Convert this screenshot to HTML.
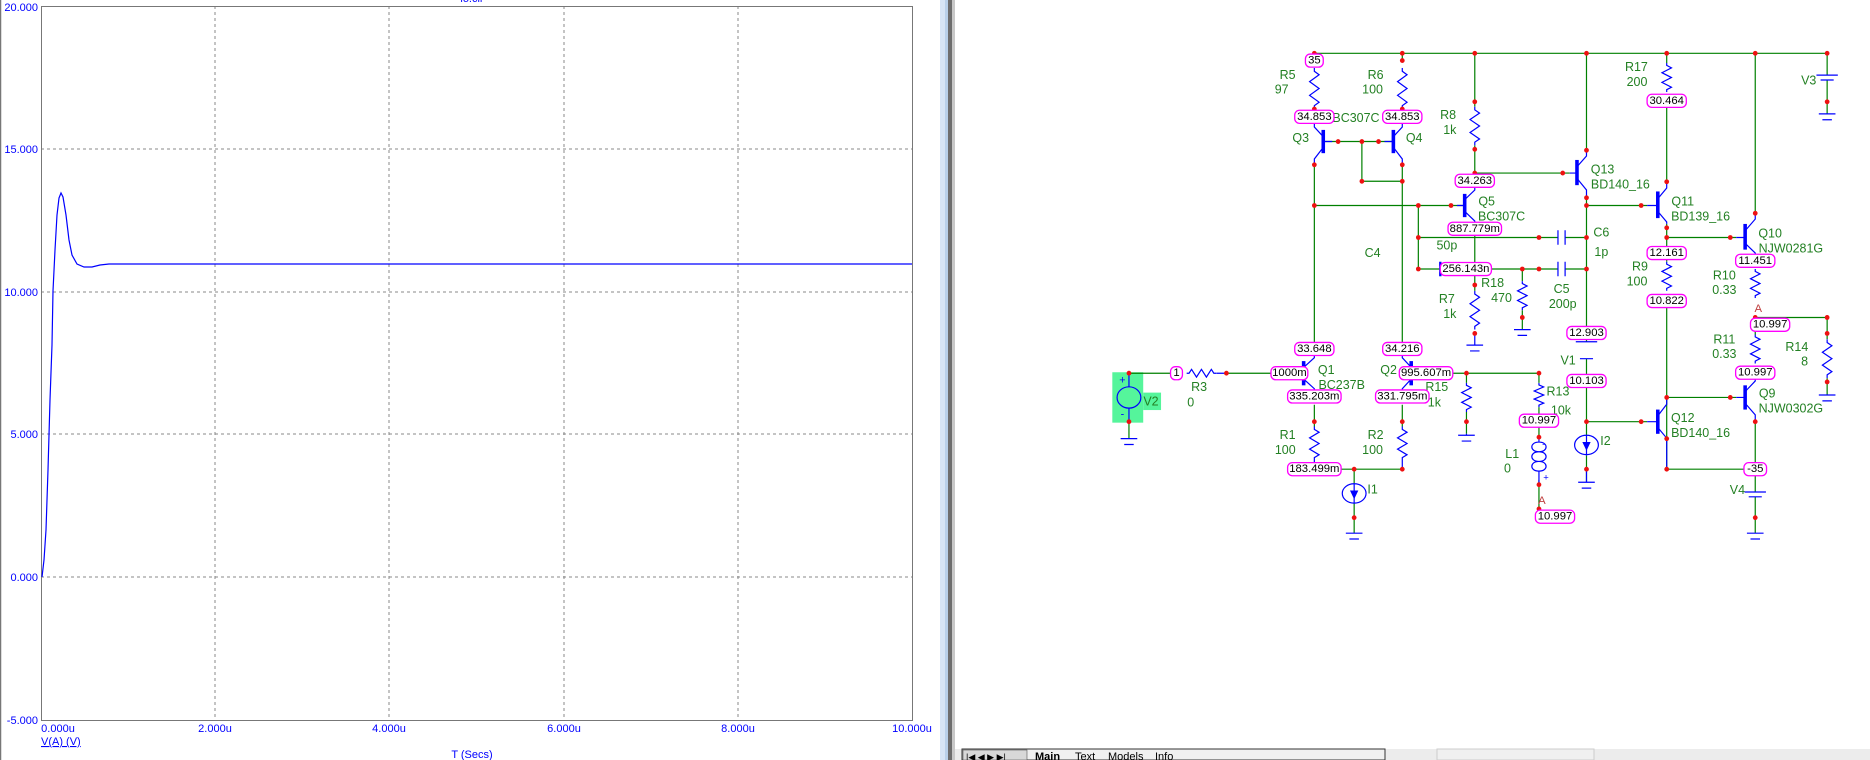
<!DOCTYPE html>
<html><head><meta charset="utf-8"><style>
html,body{margin:0;padding:0;background:#fff;width:1870px;height:760px;overflow:hidden;font-family:"Liberation Sans",Arial,sans-serif}
svg{position:absolute;left:0;top:0}
.ax{fill:#0000ff;font-size:11px}
.g{fill:#238023;font-size:21px;text-anchor:middle;dominant-baseline:central}
.bx rect{fill:#fff;stroke:#ff00ff;stroke-width:2.2}
.bx text{fill:#000;font-size:19px;text-anchor:middle;dominant-baseline:central}
.w{stroke:#008000;fill:none}
.b{stroke:#0000ff;fill:none}
.w,.b{vector-effect:non-scaling-stroke;stroke-width:1.2}
.d{fill:#ee1111}
.bar{fill:#0000ff}
</style></head><body>
<svg width="1870" height="760" viewBox="0 0 1870 760">
<rect x="0" y="0" width="940" height="760" fill="#fff"/>
<line x1="0.5" y1="0" x2="0.5" y2="760" stroke="#777" stroke-width="1.5"/>
<g stroke="#888" stroke-width="1" stroke-dasharray="3,3">
<line x1="41" y1="149" x2="912" y2="149"/><line x1="41" y1="292" x2="912" y2="292"/>
<line x1="41" y1="434" x2="912" y2="434"/><line x1="41" y1="577" x2="912" y2="577"/>
<line x1="215" y1="6" x2="215" y2="720"/><line x1="389" y1="6" x2="389" y2="720"/>
<line x1="564" y1="6" x2="564" y2="720"/><line x1="738" y1="6" x2="738" y2="720"/>
</g>
<rect x="41.5" y="6.5" width="871" height="714" fill="none" stroke="#777" stroke-width="1"/>
<text class="ax" x="38" y="11" text-anchor="end">20.000</text>
<text class="ax" x="38" y="153" text-anchor="end">15.000</text>
<text class="ax" x="38" y="296" text-anchor="end">10.000</text>
<text class="ax" x="38" y="438" text-anchor="end">5.000</text>
<text class="ax" x="38" y="581" text-anchor="end">0.000</text>
<text class="ax" x="38" y="724" text-anchor="end">-5.000</text>
<text class="ax" x="58" y="732" text-anchor="middle">0.000u</text>
<text class="ax" x="215" y="732" text-anchor="middle">2.000u</text>
<text class="ax" x="389" y="732" text-anchor="middle">4.000u</text>
<text class="ax" x="564" y="732" text-anchor="middle">6.000u</text>
<text class="ax" x="738" y="732" text-anchor="middle">8.000u</text>
<text class="ax" x="912" y="732" text-anchor="middle">10.000u</text>
<text class="ax" x="41" y="745" text-decoration="underline">V(A) (V)</text>
<text class="ax" x="472" y="758" text-anchor="middle">T (Secs)</text>
<text class="ax" x="472" y="2" text-anchor="middle">io.cir</text>
<polyline fill="none" stroke="#0000ff" stroke-width="1.2" points="42,577 44,560 46,530 48,470 50,400 52,345 53,291 55,250 57,215 59,198 61,193 63,197 66,215 69,240 72,255 77,264 84,267 92,267 100,265 109,264 912,264"/>
<rect x="940" y="0" width="8" height="760" fill="#d6e4f4"/>
<rect x="945" y="0" width="3" height="760" fill="#b8cfe8"/>
<rect x="948" y="0" width="4" height="760" fill="#6d6d6d"/>
<rect x="952" y="0" width="3" height="760" fill="#c8c8c8"/>
<rect x="955" y="749" width="915" height="11" fill="#ececec"/>
<rect x="962" y="749" width="423" height="11" fill="#f0f0f0" stroke="#333" stroke-width="1"/>
<g fill="#000" font-size="11">
<rect x="963" y="750" width="64" height="10" fill="#d8d8d8" stroke="#555" stroke-width="0.6"/>
<text x="966" y="760" font-size="9">|◀ ◀ ▶ ▶|</text>
<text x="1035" y="760" font-weight="bold">Main</text>
<text x="1075" y="760">Text</text>
<text x="1108" y="760">Models</text>
<text x="1155" y="760">Info</text>
</g>
<rect x="1437" y="749" width="157" height="11" fill="#f0f0f0" stroke="#ccc"/>
<defs>
<symbol id="rv" viewBox="0 0 20 60" preserveAspectRatio="none"><path d="M10 0 L10 5 L18 10 L2 20 L18 30 L2 40 L18 50 L10 55 L10 60" fill="none" stroke="#0000ff" stroke-width="1.2" vector-effect="non-scaling-stroke"/></symbol>
<symbol id="rh" viewBox="0 0 60 20" preserveAspectRatio="none"><path d="M0 10 L5 10 L10 2 L20 18 L30 2 L40 18 L50 2 L55 10 L60 10" fill="none" stroke="#0000ff" stroke-width="1.2" vector-effect="non-scaling-stroke"/></symbol>
</defs>
<g transform="translate(940,0) scale(0.5942,0.4847)">
<rect x="290" y="768" width="52" height="104" fill="#55f59b"/>
<rect x="342" y="810" width="30" height="36" fill="#55f59b"/>
<path class="w" d="M630 110H1493 M630 110V125 M630 225V241 M778 110V125 M778 225V241
M630 340V720 M645 292H765 M710 292V374H778 M778 340V720
M630 424H880 M805 424V555 M805 490H1040 M1052 490H1088 M805 555H842 M925 555H1040 M1052 555H1088
M900 110V220 M900 300V373 M900 357H1060 M900 485V600 M980 555V580 M980 640V680
M1088 110V310 M1088 408V705 M1088 740V898 M1088 940V995 M1088 424H1190 M1088 870H1190
M1223 110V130 M1223 222V375 M1223 462V540 M1223 635V968 M1223 490H1340 M1223 820H1340 M1223 968H1355
M1372 110V440 M1372 655H1493 M1372 655V690 M1372 870V1015 M1372 1025V1100
M1493 110V155 M1493 165V235 M1493 655V700 M1493 780V815
M318 770H390 M482 770H560 M862 770H1008 M886 770V790 M886 850V895 M1008 770V790 M1008 840V900 M1008 990V1050
M630 835V880 M778 835V880 M672 968H778 M697 968V998 M697 1038V1100 M318 870V905"/>
<use href="#rv" x="620" y="140" width="20" height="85"/>
<use href="#rv" x="768" y="140" width="20" height="85"/>
<use href="#rv" x="890" y="220" width="20" height="80"/>
<use href="#rv" x="890" y="600" width="20" height="80"/>
<use href="#rv" x="970" y="580" width="20" height="60"/>
<use href="#rv" x="1213" y="130" width="20" height="60"/>
<use href="#rv" x="1213" y="540" width="20" height="60"/>
<use href="#rv" x="1362" y="555" width="20" height="60"/>
<use href="#rv" x="1362" y="690" width="20" height="60"/>
<use href="#rv" x="1483" y="700" width="20" height="80"/>
<use href="#rv" x="876" y="790" width="20" height="60"/>
<use href="#rv" x="998" y="790" width="20" height="50"/>
<use href="#rv" x="620" y="880" width="20" height="70"/>
<use href="#rv" x="768" y="880" width="20" height="70"/>
<use href="#rh" x="415" y="760" width="50" height="20"/>
<path class="b" d="M465 770H482 M630 225V230 M630 950V958 M778 950V968"/>
<rect class="bar" x="642" y="268" width="6" height="48"/><path class="b" d="M645 282L630 262V241 M645 304L630 328V340 M645 292H660"/>
<rect class="bar" x="760" y="268" width="6" height="48"/><path class="b" d="M763 282L778 262V241 M763 304L778 328V340 M763 292H748"/>
<rect class="bar" x="880" y="400" width="6" height="48"/><path class="b" d="M883 412L900 392V385 M883 436L900 456V460 M883 424H870"/>
<rect class="bar" x="1069" y="330" width="6" height="52"/><path class="b" d="M1072 344L1088 322V310 M1072 368L1088 392V408 M1072 357H1060"/>
<rect class="bar" x="1205" y="395" width="6" height="55"/><path class="b" d="M1208 410L1223 388V375 M1208 436L1223 458V462 M1208 424H1190"/>
<rect class="bar" x="1352" y="462" width="6" height="53"/><path class="b" d="M1355 476L1372 452V440 M1355 502L1372 522V525 M1355 490H1340"/>
<rect class="bar" x="1352" y="795" width="6" height="50"/><path class="b" d="M1355 808L1372 786V769 M1355 832L1372 856V870 M1355 820H1340"/>
<rect class="bar" x="1205" y="845" width="6" height="50"/><path class="b" d="M1208 858L1223 834V820 M1208 882L1223 904V968 M1208 870H1190"/>
<rect class="bar" x="609" y="745" width="6" height="50"/><path class="b" d="M612 758L630 738V720 M612 782L630 802V818"/>
<rect class="bar" x="790" y="745" width="6" height="50"/><path class="b" d="M793 758L778 738V720 M793 782L778 802V818"/>
<rect class="bar" x="840" y="540" width="4" height="30"/>
<path class="b" d="M1040 475V505 M1052 475V505 M1040 540V570 M1052 540V570"/>
<path class="b" d="M1475 155H1511 M1482 165H1504 M1070 705H1106 M1077 740H1099 M1354 1015H1390 M1361 1025H1383"/>
<path class="b" d="M886 895V898 M872 898H900 M878 910H894
M900 688V712 M886 712H914 M892 724H908 M966 680H994 M972 692H988
M1074 995H1102 M1080 1007H1096 M1088 968V995
M1358 1100H1386 M1364 1112H1380 M1479 235H1507 M1485 247H1501 M1479 815H1507 M1485 827H1501
M683 1100H711 M689 1112H705 M304 905H332 M310 917H326"/>
<ellipse class="b" cx="697" cy="1018" rx="20" ry="20"/><path class="b" d="M697 998V1038"/><path d="M690 1012H704L697 1030Z" fill="#0000ff"/>
<ellipse class="b" cx="1088" cy="918" rx="20" ry="20"/><path class="b" d="M1088 898V940"/><path d="M1081 912H1095L1088 930Z" fill="#0000ff"/>
<ellipse class="b" cx="318" cy="820" rx="20" ry="22"/><path class="b" d="M318 770V798 M318 842V870"/>
<text class="g" transform="translate(307,785) scale(1,1.226)" style="fill:#0000ff;font-size:18px">+</text>
<text class="g" transform="translate(307,855) scale(1,1.226)" style="fill:#0000ff;font-size:18px">-</text>
<path class="b" d="M1008 900V912 C1024 912,1024 932,1008 932 C992 932,992 912,1008 912 M1008 932 C1024 932,1024 952,1008 952 C992 952,992 932,1008 932 M1008 952 C1024 952,1024 972,1008 972 C992 972,992 952,1008 952 M1008 972V1000"/>
<g class="d">
<ellipse cx="630" cy="110" rx="4" ry="5"/><ellipse cx="778" cy="110" rx="4" ry="5"/><ellipse cx="900" cy="110" rx="4" ry="5"/><ellipse cx="1088" cy="110" rx="4" ry="5"/><ellipse cx="1223" cy="110" rx="4" ry="5"/><ellipse cx="1372" cy="110" rx="4" ry="5"/><ellipse cx="1493" cy="110" rx="4" ry="5"/>
<ellipse cx="778" cy="125" rx="4" ry="5"/><ellipse cx="630" cy="225" rx="4" ry="5"/><ellipse cx="778" cy="225" rx="4" ry="5"/>
<ellipse cx="670" cy="292" rx="4" ry="5"/><ellipse cx="710" cy="292" rx="4" ry="5"/><ellipse cx="738" cy="292" rx="4" ry="5"/>
<ellipse cx="630" cy="340" rx="4" ry="5"/><ellipse cx="778" cy="340" rx="4" ry="5"/><ellipse cx="710" cy="374" rx="4" ry="5"/><ellipse cx="778" cy="374" rx="4" ry="5"/>
<ellipse cx="630" cy="424" rx="4" ry="5"/><ellipse cx="805" cy="424" rx="4" ry="5"/><ellipse cx="860" cy="424" rx="4" ry="5"/>
<ellipse cx="900" cy="210" rx="4" ry="5"/><ellipse cx="900" cy="308" rx="4" ry="5"/><ellipse cx="900" cy="357" rx="4" ry="5"/><ellipse cx="1048" cy="357" rx="4" ry="5"/>
<ellipse cx="1088" cy="310" rx="4" ry="5"/><ellipse cx="1088" cy="408" rx="4" ry="5"/><ellipse cx="1088" cy="424" rx="4" ry="5"/><ellipse cx="1180" cy="424" rx="4" ry="5"/>
<ellipse cx="805" cy="490" rx="4" ry="5"/><ellipse cx="1008" cy="490" rx="4" ry="5"/><ellipse cx="1088" cy="490" rx="4" ry="5"/>
<ellipse cx="805" cy="555" rx="4" ry="5"/><ellipse cx="980" cy="555" rx="4" ry="5"/><ellipse cx="1008" cy="555" rx="4" ry="5"/><ellipse cx="1088" cy="555" rx="4" ry="5"/>
<ellipse cx="900" cy="588" rx="4" ry="5"/><ellipse cx="900" cy="688" rx="4" ry="5"/><ellipse cx="980" cy="655" rx="4" ry="5"/>
<ellipse cx="1223" cy="375" rx="4" ry="5"/><ellipse cx="1223" cy="470" rx="4" ry="5"/><ellipse cx="1223" cy="490" rx="4" ry="5"/><ellipse cx="1330" cy="490" rx="4" ry="5"/>
<ellipse cx="1372" cy="440" rx="4" ry="5"/><ellipse cx="1372" cy="655" rx="4" ry="5"/><ellipse cx="1493" cy="655" rx="4" ry="5"/><ellipse cx="1493" cy="688" rx="4" ry="5"/><ellipse cx="1493" cy="788" rx="4" ry="5"/><ellipse cx="1493" cy="210" rx="4" ry="5"/>
<ellipse cx="1223" cy="820" rx="4" ry="5"/><ellipse cx="1330" cy="820" rx="4" ry="5"/><ellipse cx="1372" cy="870" rx="4" ry="5"/><ellipse cx="1223" cy="968" rx="4" ry="5"/><ellipse cx="1223" cy="905" rx="4" ry="5"/><ellipse cx="1372" cy="1068" rx="4" ry="5"/>
<ellipse cx="1088" cy="870" rx="4" ry="5"/><ellipse cx="1180" cy="870" rx="4" ry="5"/><ellipse cx="1088" cy="968" rx="4" ry="5"/>
<ellipse cx="318" cy="770" rx="4" ry="5"/><ellipse cx="318" cy="870" rx="4" ry="5"/><ellipse cx="482" cy="770" rx="4" ry="5"/>
<ellipse cx="886" cy="770" rx="4" ry="5"/><ellipse cx="1008" cy="770" rx="4" ry="5"/><ellipse cx="886" cy="870" rx="4" ry="5"/>
<ellipse cx="1008" cy="902" rx="4" ry="5"/><ellipse cx="1008" cy="1000" rx="4" ry="5"/><ellipse cx="1008" cy="1050" rx="4" ry="5"/>
<ellipse cx="630" cy="870" rx="4" ry="5"/><ellipse cx="778" cy="870" rx="4" ry="5"/><ellipse cx="697" cy="968" rx="4" ry="5"/><ellipse cx="778" cy="968" rx="4" ry="5"/><ellipse cx="697" cy="1068" rx="4" ry="5"/>
</g>
<g class="g">
<text transform="translate(585,155) scale(1,1.226)">R5</text><text transform="translate(575,185) scale(1,1.226)">97</text>
<text transform="translate(733,155) scale(1,1.226)">R6</text><text transform="translate(728,185) scale(1,1.226)">100</text>
<text transform="translate(700,243) scale(1,1.226)">BC307C</text>
<text transform="translate(607,285) scale(1,1.226)">Q3</text><text transform="translate(798,285) scale(1,1.226)">Q4</text>
<text transform="translate(855,237) scale(1,1.226)">R8</text><text transform="translate(858,268) scale(1,1.226)">1k</text>
<text transform="translate(1115,350) scale(1,1.226)">Q13</text><text transform="translate(1145,381) scale(1,1.226)">BD140_16</text>
<text transform="translate(920,416) scale(1,1.226)">Q5</text><text transform="translate(945,447) scale(1,1.226)">BC307C</text>
<text transform="translate(1113,480) scale(1,1.226)">C6</text><text transform="translate(1113,520) scale(1,1.226)">1p</text>
<text transform="translate(853,507) scale(1,1.226)">50p</text><text transform="translate(728,522) scale(1,1.226)">C4</text>
<text transform="translate(930,584) scale(1,1.226)">R18</text><text transform="translate(945,615) scale(1,1.226)">470</text>
<text transform="translate(853,617) scale(1,1.226)">R7</text><text transform="translate(858,648) scale(1,1.226)">1k</text>
<text transform="translate(1046,596) scale(1,1.226)">C5</text><text transform="translate(1048,627) scale(1,1.226)">200p</text>
<text transform="translate(1172,138) scale(1,1.226)">R17</text><text transform="translate(1173,169) scale(1,1.226)">200</text>
<text transform="translate(1250,416) scale(1,1.226)">Q11</text><text transform="translate(1280,447) scale(1,1.226)">BD139_16</text>
<text transform="translate(1178,550) scale(1,1.226)">R9</text><text transform="translate(1173,581) scale(1,1.226)">100</text>
<text transform="translate(1397,482) scale(1,1.226)">Q10</text><text transform="translate(1432,513) scale(1,1.226)">NJW0281G</text>
<text transform="translate(1320,568) scale(1,1.226)">R10</text><text transform="translate(1320,598) scale(1,1.226)">0.33</text>
<text transform="translate(1320,700) scale(1,1.226)">R11</text><text transform="translate(1320,730) scale(1,1.226)">0.33</text>
<text transform="translate(1442,716) scale(1,1.226)">R14</text><text transform="translate(1455,746) scale(1,1.226)">8</text>
<text transform="translate(1392,812) scale(1,1.226)">Q9</text><text transform="translate(1432,843) scale(1,1.226)">NJW0302G</text>
<text transform="translate(1250,862) scale(1,1.226)">Q12</text><text transform="translate(1280,893) scale(1,1.226)">BD140_16</text>
<text transform="translate(1462,166) scale(1,1.226)">V3</text><text transform="translate(1057,744) scale(1,1.226)">V1</text>
<text transform="translate(1120,910) scale(1,1.226)">I2</text><text transform="translate(1342,1011) scale(1,1.226)">V4</text>
<text transform="translate(963,937) scale(1,1.226)">L1</text><text transform="translate(955,967) scale(1,1.226)">0</text>
<text transform="translate(1040,808) scale(1,1.226)">R13</text><text transform="translate(1045,847) scale(1,1.226)">10k</text>
<text transform="translate(836,798) scale(1,1.226)">R15</text><text transform="translate(832,830) scale(1,1.226)">1k</text>
<text transform="translate(755,763) scale(1,1.226)">Q2</text><text transform="translate(650,763) scale(1,1.226)">Q1</text>
<text transform="translate(676,794) scale(1,1.226)">BC237B</text>
<text transform="translate(436,798) scale(1,1.226)">R3</text><text transform="translate(422,830) scale(1,1.226)">0</text>
<text transform="translate(355,828) scale(1,1.226)">V2</text>
<text transform="translate(585,897) scale(1,1.226)">R1</text><text transform="translate(581,928) scale(1,1.226)">100</text>
<text transform="translate(733,897) scale(1,1.226)">R2</text><text transform="translate(728,928) scale(1,1.226)">100</text>
<text transform="translate(728,1010) scale(1,1.226)">I1</text>
<text transform="translate(1377,637) scale(1,1.226)" style="fill:#c04040;font-size:19px">A</text>
<text transform="translate(1013,1034) scale(1,1.226)" style="fill:#c04040;font-size:19px">A</text>
<text transform="translate(1016,917) scale(1,1.226)" style="fill:#0000ff;font-size:16px">-</text>
<text transform="translate(1020,986) scale(1,1.226)" style="fill:#0000ff;font-size:16px">+</text>
</g>
<g class="bx">
<g transform="translate(630,125) scale(1,1.226)"><rect x="-15" y="-11" width="30" height="22" rx="8"/><text>35</text></g>
<g transform="translate(630,241) scale(1,1.226)"><rect x="-33" y="-11" width="66" height="22" rx="8"/><text>34.853</text></g>
<g transform="translate(778,241) scale(1,1.226)"><rect x="-33" y="-11" width="66" height="22" rx="8"/><text>34.853</text></g>
<g transform="translate(900,373) scale(1,1.226)"><rect x="-33" y="-11" width="66" height="22" rx="8"/><text>34.263</text></g>
<g transform="translate(900,472) scale(1,1.226)"><rect x="-45" y="-11" width="90" height="22" rx="8"/><text>887.779m</text></g>
<g transform="translate(885,555) scale(1,1.226)"><rect x="-43" y="-11" width="86" height="22" rx="8"/><text>256.143n</text></g>
<g transform="translate(630,720) scale(1,1.226)"><rect x="-33" y="-11" width="66" height="22" rx="8"/><text>33.648</text></g>
<g transform="translate(778,720) scale(1,1.226)"><rect x="-33" y="-11" width="66" height="22" rx="8"/><text>34.216</text></g>
<g transform="translate(588,770) scale(1,1.226)"><rect x="-31" y="-11" width="62" height="22" rx="8"/><text>1000m</text></g>
<g transform="translate(818,770) scale(1,1.226)"><rect x="-45" y="-11" width="90" height="22" rx="8"/><text>995.607m</text></g>
<g transform="translate(630,818) scale(1,1.226)"><rect x="-45" y="-11" width="90" height="22" rx="8"/><text>335.203m</text></g>
<g transform="translate(778,818) scale(1,1.226)"><rect x="-45" y="-11" width="90" height="22" rx="8"/><text>331.795m</text></g>
<g transform="translate(630,968) scale(1,1.226)"><rect x="-45" y="-11" width="90" height="22" rx="8"/><text>183.499m</text></g>
<g transform="translate(398,770) scale(1,1.226)"><rect x="-10" y="-11" width="20" height="22" rx="8"/><text>1</text></g>
<g transform="translate(1008,868) scale(1,1.226)"><rect x="-33" y="-11" width="66" height="22" rx="8"/><text>10.997</text></g>
<g transform="translate(1035,1066) scale(1,1.226)"><rect x="-33" y="-11" width="66" height="22" rx="8"/><text>10.997</text></g>
<g transform="translate(1088,687) scale(1,1.226)"><rect x="-33" y="-11" width="66" height="22" rx="8"/><text>12.903</text></g>
<g transform="translate(1088,786) scale(1,1.226)"><rect x="-33" y="-11" width="66" height="22" rx="8"/><text>10.103</text></g>
<g transform="translate(1223,208) scale(1,1.226)"><rect x="-33" y="-11" width="66" height="22" rx="8"/><text>30.464</text></g>
<g transform="translate(1223,522) scale(1,1.226)"><rect x="-33" y="-11" width="66" height="22" rx="8"/><text>12.161</text></g>
<g transform="translate(1223,621) scale(1,1.226)"><rect x="-33" y="-11" width="66" height="22" rx="8"/><text>10.822</text></g>
<g transform="translate(1372,538) scale(1,1.226)"><rect x="-33" y="-11" width="66" height="22" rx="8"/><text>11.451</text></g>
<g transform="translate(1397,670) scale(1,1.226)"><rect x="-33" y="-11" width="66" height="22" rx="8"/><text>10.997</text></g>
<g transform="translate(1372,769) scale(1,1.226)"><rect x="-33" y="-11" width="66" height="22" rx="8"/><text>10.997</text></g>
<g transform="translate(1372,968) scale(1,1.226)"><rect x="-19" y="-11" width="38" height="22" rx="8"/><text>-35</text></g>
</g>
</g>
</svg>
</body></html>
